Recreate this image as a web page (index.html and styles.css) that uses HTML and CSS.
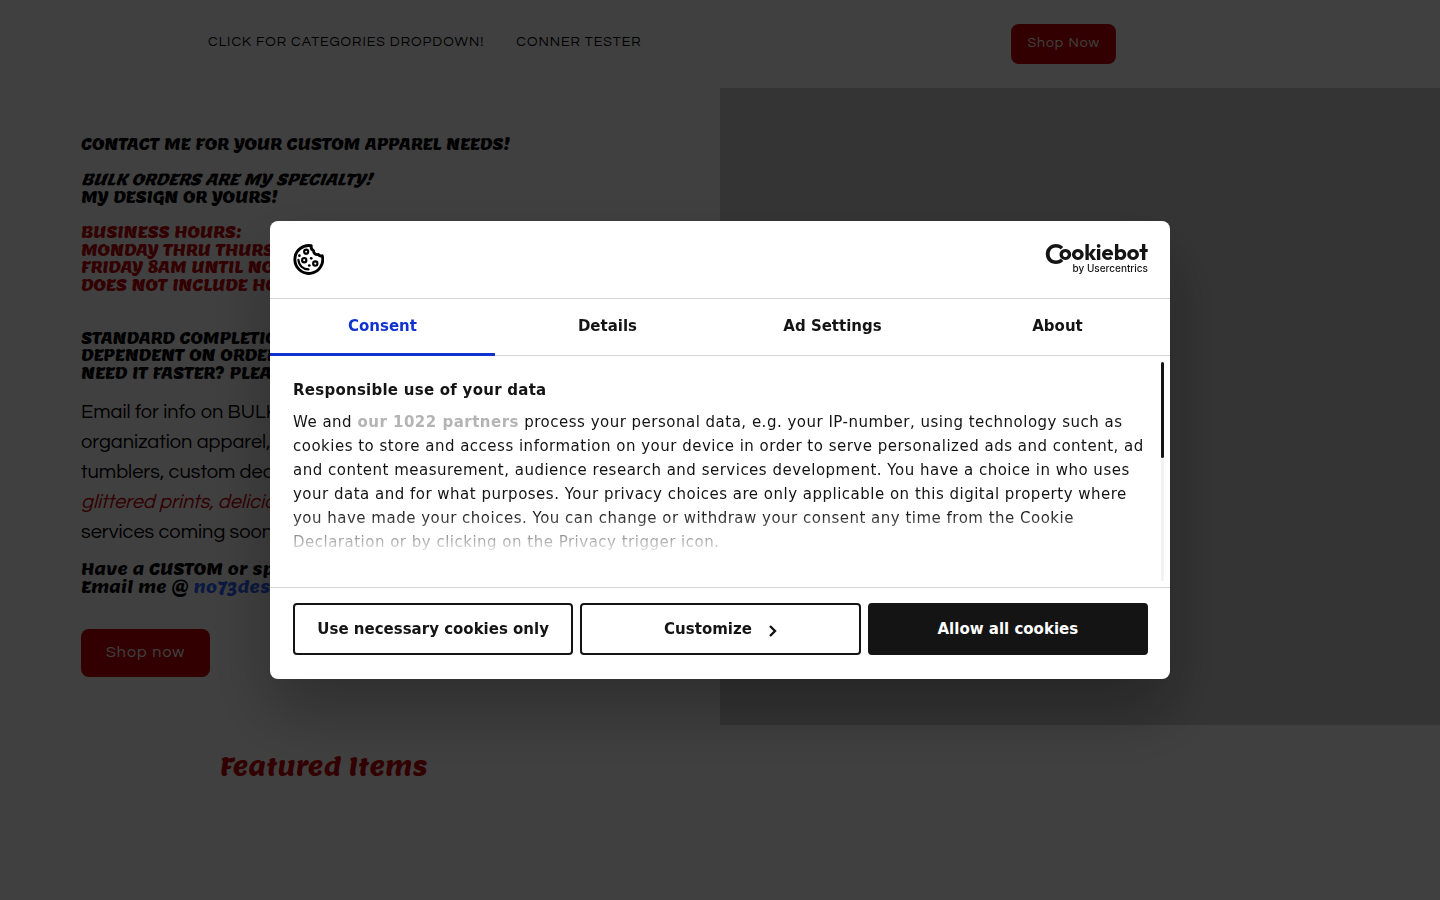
FILE: index.html
```html
<!DOCTYPE html>
<html lang="en">

<head>
    <meta charset="utf-8">
    <title>Custom Apparel</title>
    <link rel="stylesheet" href="styles.css">
</head>

<body>
    <!-- Site header -->
    <header class="site-header">
        <nav class="site-nav">
            <a href="#">CLICK FOR CATEGORIES DROPDOWN!</a>
            <a href="#">CONNER TESTER</a>
        </nav>
        <a class="shop-button small" href="#">Shop Now</a>
    </header>

    <main>
        <section class="hero">
            <div class="hero-text">
                <h4>CONTACT ME FOR YOUR CUSTOM APPAREL NEEDS!<br><br>
                    <em>BULK ORDERS ARE MY SPECIALTY!</em><br>
                    MY DESIGN OR YOURS!<br><br>
                    <span class="red">BUSINESS HOURS:<br>
                        MONDAY THRU THURSDAY<br>
                        FRIDAY 8AM UNTIL NOON<br>
                        DOES NOT INCLUDE HOLIDAYS</span><br><br><br>
                    STANDARD COMPLETION<br>
                    DEPENDENT ON ORDER<br>
                    NEED IT FASTER? PLEASE ASK</h4>
                <p>Email for info on BULK<br>
                    organization apparel,<br>
                    tumblers, custom decals<br>
                    <em class="red">glittered prints, delicious</em><br>
                    services coming soon</p>
                <h4>Have a CUSTOM or special<br>
                    Email me @ <a href="#">no73designs</a></h4>
                <a class="shop-button" href="#">Shop now</a>
            </div>
            <div class="hero-image"></div>
        </section>

        <section class="featured">
            <h2>Featured Items</h2>
        </section>
    </main>

    <!-- Cookie consent -->
    <div class="overlay">
        <div class="dialog" role="dialog" aria-modal="true" aria-labelledby="dialog-title">
            <div class="dialog-header">
                <svg class="cookie-icon" viewBox="0 0 32 32" fill="none" stroke="#000" stroke-linecap="round" stroke-linejoin="round">
                    <path stroke-width="3" d="M18.8 1.8A14.4 14.4 0 1 0 30.2 12.2C28.6 12.6 27 12.1 26.2 10.8C23.6 11.6 21 9.6 21.2 6.9C19.4 6 18.4 3.8 18.8 1.8Z" />
                    <path stroke-width="2.2" d="M5.6 16.3C5.9 22.1 10.4 26.1 16 26.2" />
                    <circle cx="13.6" cy="7.9" r="2.1" stroke-width="2.2" />
                    <circle cx="11.6" cy="16.7" r="2.2" stroke-width="2.2" />
                    <circle cx="23" cy="20.2" r="2.2" stroke-width="2.2" />
                    <g fill="#000" stroke="none">
                        <circle cx="6.6" cy="12" r="1.4" />
                        <circle cx="18.8" cy="14.8" r="1.4" />
                        <circle cx="16.8" cy="22.2" r="1.4" />
                    </g>
                </svg>
                <a class="logo" href="#">
                    <span class="logo-name"><span class="logo-c">C</span>ookiebot</span>
                    <span class="logo-by">by Usercentrics</span>
                </a>
            </div>

            <div class="tabs" role="tablist">
                <button class="tab active" role="tab" aria-selected="true">Consent</button>
                <button class="tab" role="tab">Details</button>
                <button class="tab" role="tab">Ad Settings</button>
                <button class="tab" role="tab">About</button>
            </div>

            <div class="dialog-body">
                <div class="dialog-content">
                    <h3 id="dialog-title">Responsible use of your data</h3>
                    <p>We and <a href="#">our 1022 partners</a> process your personal data, e.g. your IP-number, using technology such as cookies to store and access information on your device in order to serve personalized ads and content, ad and content measurement, audience research and services development. You have a choice in who uses your data and for what purposes. Your privacy choices are only applicable on this digital property where you have made your choices. You can change or withdraw your consent any time from the Cookie Declaration or by clicking on the Privacy trigger icon.</p>
                </div>
                <div class="scroll-track">
                    <div class="scroll-thumb"></div>
                </div>
            </div>

            <div class="dialog-footer">
                <button class="choice">Use necessary cookies only</button>
                <button class="choice">Customize
                    <svg class="chevron" viewBox="0 0 8 12" fill="none" stroke="#141414" stroke-width="2.4">
                        <path d="M1 1L6 6L1 11" />
                    </svg>
                </button>
                <button class="choice primary">Allow all cookies</button>
            </div>
        </div>
    </div>
</body>

</html>
```

FILE: styles.css
```css
* {
    box-sizing: border-box;
}

body {
    margin: 0;
    height: 100vh;
    overflow: hidden;
    background: #fff;
    color: #000;
    font-family: Questrial, Inter, sans-serif;
}

a {
    text-decoration: none;
}

.site-header {
    display: flex;
    align-items: center;
    justify-content: space-between;
    height: 88px;
    padding: 0 22.5% 0 208px;
}

.site-nav {
    display: flex;
    gap: 32px;
    padding-bottom: 5px;
}

.site-nav a {
    color: #000;
    font-size: 14px;
    letter-spacing: 1px;
}

.shop-button {
    display: inline-block;
    padding: 13px 25px 15px;
    border-radius: 8px;
    background: #c80000;
    color: #fff;
    font-size: 16px;
    line-height: 20px;
    letter-spacing: 1px;
}

.shop-button.small {
    padding: 9px 16px 11px;
    font-size: 14px;
}

.red {
    color: #c80000;
}

/* Two halves, text and picture */
.hero {
    display: grid;
    grid-template-columns: 1fr 1fr;
}

.hero-text {
    padding: 48px 80px 48px 81px;
}

.hero-text h4 {
    margin: 0;
    font-family: Lemon, Lato, sans-serif;
    font-size: 16px;
    font-weight: normal;
    line-height: 1.1;
}

.hero-text h4 a {
    color: #2f5fff;
}

.hero-text p {
    margin: 15px 0 14px;
    font-size: 20px;
    line-height: 30px;
}

.hero-text .shop-button {
    margin-top: 32px;
}

.hero-image {
    background: #d0d0d0;
}

.featured {
    max-width: 1000px;
    margin: 0 auto;
    padding-top: 24px;
}

.featured h2 {
    margin: 0;
    color: #c80000;
    font-family: Lemon, Lato, sans-serif;
    font-size: 24px;
    font-weight: normal;
    line-height: 36px;
}

.overlay {
    position: fixed;
    inset: 0;
    display: flex;
    align-items: center;
    justify-content: center;
    background: rgba(0, 0, 0, 0.75);
}

.dialog {
    width: 100%;
    max-width: 900px;
    border-radius: 8px;
    background: #fff;
    box-shadow: 0 32px 68px rgba(0, 0, 0, 0.3);
    color: #141414;
    font-family: "DejaVu Sans", sans-serif;
    font-size: 15px;
}

.dialog-header {
    display: flex;
    align-items: center;
    justify-content: space-between;
    height: 78px;
    padding: 0 22px 0 23px;
    border-bottom: 1px solid #d6d6d6;
}

.cookie-icon {
    width: 31px;
    height: 31px;
}

.logo {
    display: flex;
    flex-direction: column;
    align-items: flex-end;
    padding-bottom: 3px;
    color: #141414;
}

.logo-name {
    font-family: Outfit, Lato, sans-serif;
    font-size: 22px;
    font-weight: 700;
    line-height: 20px;
}

.logo-c {
    margin-right: -5px;
    font-size: 28px;
    font-weight: 600;
    line-height: 16px;
    vertical-align: -4px;
}

.logo-by {
    font-family: Inter, sans-serif;
    font-size: 10px;
    font-weight: 500;
    line-height: 12px;
}

.tabs {
    display: grid;
    grid-template-columns: repeat(4, 1fr);
    border-bottom: 1px solid #d6d6d6;
}

.tab {
    height: 56px;
    padding: 0 0 2px;
    border: 0;
    background: none;
    color: #141414;
    font: bold 15px "DejaVu Sans", sans-serif;
    cursor: pointer;
}

.tab.active {
    color: #1032cf;
    box-shadow: inset 0 -2px #1032cf, 0 1px #1032cf;
}

.dialog-body {
    position: relative;
    border-bottom: 1px solid #d6d6d6;
}

.dialog-content {
    padding: 24px 22px 33px 23px;
    -webkit-mask-image: linear-gradient(to bottom, #000 156px, transparent 200px);
    mask-image: linear-gradient(to bottom, #000 156px, transparent 200px);
}

.dialog-content h3 {
    margin: 0 0 10px;
    font-size: 15px;
    line-height: 20px;
    letter-spacing: 0.017em;
}

.dialog-content p {
    margin: 0;
    line-height: 24px;
    letter-spacing: 0.033em;
}

.dialog-content a {
    color: #b4b4b4;
    font-weight: bold;
}

/* Thin bar over the right edge of the text */
.scroll-track {
    position: absolute;
    top: 6px;
    right: 6px;
    bottom: 6px;
    width: 3px;
    border-radius: 2px;
    background: #f2f2f2;
}

.scroll-thumb {
    height: 96px;
    border-radius: 2px;
    background: #141414;
}

.dialog-footer {
    display: grid;
    grid-template-columns: repeat(3, 1fr);
    gap: 7px;
    padding: 15px 22px 24px 23px;
}

.choice {
    display: flex;
    align-items: center;
    justify-content: center;
    gap: 17px;
    height: 52px;
    border: 2px solid #141414;
    border-radius: 4px;
    background: #fff;
    color: #141414;
    font: bold 15px "DejaVu Sans", sans-serif;
    cursor: pointer;
}

.choice.primary {
    background: #141414;
    color: #fff;
}

.chevron {
    width: 8px;
    height: 12px;
    margin-top: 4px;
}
```
